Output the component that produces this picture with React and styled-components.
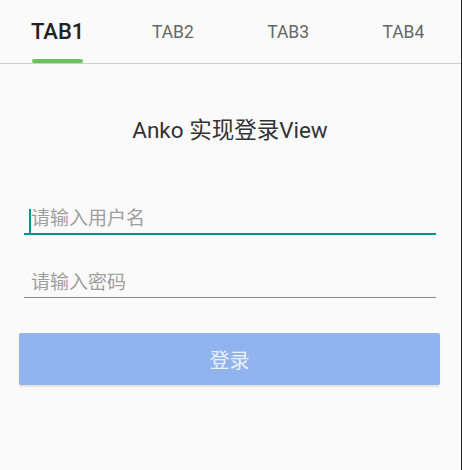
import React, { useState } from 'react';
import styled, { createGlobalStyle } from 'styled-components';

const GlobalStyle = createGlobalStyle`
    html, body {
        margin: 0;
        padding: 0;
        background: #fafafa;
    }
`

const Screen = styled.div`
    width: 462px;
    height: 470px;
    box-sizing: border-box;
    background: #fafafa;
    border-right: 1px solid #262626; /* 스크린샷 오른쪽 테두리 */
    font-family: Roboto, "Noto Sans CJK SC", sans-serif;
    display: flex;
    flex-direction: column;
`

const TabBar = styled.div`
    display: flex;
    height: 64px;
    border-bottom: 1px solid #cfcfcf;
    box-sizing: border-box;
`

const Tab = styled.div`
    flex: 1;
    display: flex;
    flex-direction: column;
    align-items: center;
    justify-content: flex-end;
    cursor: pointer;
`

const TabLabel = styled.span`
    font-size: ${(props) => (props.active ? '22px' : '17.5px')};
    font-weight: ${(props) => (props.active ? 500 : 400)};
    color: ${(props) => (props.active ? '#222' : '#666')};
    line-height: 26px;
`

const Indicator = styled.div`
    margin-top: 14px;
    height: 4px;
    width: 51px;
    border-radius: 2px;
    background: ${(props) => (props.active ? '#6bc25a' : 'transparent')};
`

const Form = styled.div`
    display: flex;
    flex-direction: column;
    padding: 0 25px 0 24px;
`

const Title = styled.h1`
    margin: 51px 0 0;
    font-size: 22.5px;
    font-weight: 400;
    line-height: 30px;
    color: #333;
    text-align: center;
`

const Field = styled.div`
    display: flex;
    align-items: center;
    height: 30px;
    margin-top: ${(props) => props.gap}px;
    padding-left: ${(props) => (props.focused ? '5px' : '7px')};
    border-bottom: ${(props) => (props.focused ? '2px solid #009688' : '1px solid #8a8a8a')};
`

const Caret = styled.span`
    width: 2px;
    height: 24px;
    background: #009688;
    margin-top: 6px;
`

const TextInput = styled.input`
    flex: 1;
    border: none;
    outline: none;
    background: transparent;
    padding: 0;
    font-family: Roboto, "Noto Sans CJK SC", sans-serif;
    font-size: 19px;
    color: #333;
    height: 30px;

    &::placeholder {
        color: #9e9e9e;
    }
`

const LoginButton = styled.button`
    margin: 35px -4px 0 -5px;
    height: 52px;
    border: none;
    border-radius: 2px;
    background: #92b4ee;
    color: #eaf0fa;
    font-family: Roboto, "Noto Sans CJK SC", sans-serif;
    font-size: 20px;
    box-shadow: 0 2px 2px rgba(0, 0, 0, 0.1);
    cursor: pointer;
`

const tabs = ['TAB1', 'TAB2', 'TAB3', 'TAB4'];

export default function App() {
    const [current, setCurrent] = useState(0);
    const [user, setUser] = useState('');
    const [password, setPassword] = useState('');

    return (
        <>
            <GlobalStyle />
            <Screen>
                <TabBar>
                    {tabs.map((name, index) => (
                        <Tab key={name} onClick={() => setCurrent(index)}>
                            <TabLabel active={index === current}>{name}</TabLabel>
                            <Indicator active={index === current} />
                        </Tab>
                    ))}
                </TabBar>
                <Form>
                    <Title>Anko 实现登录View</Title>
                    <Field focused gap={58}>
                        <Caret />
                        <TextInput
                            placeholder='请输入用户名'
                            value={user}
                            onChange={(e) => setUser(e.target.value)}
                        />
                    </Field>
                    <Field gap={32}>
                        <TextInput
                            type='password'
                            placeholder='请输入密码'
                            value={password}
                            onChange={(e) => setPassword(e.target.value)}
                        />
                    </Field>
                    <LoginButton type='button'>登录</LoginButton>
                </Form>
            </Screen>
        </>
    );
}
